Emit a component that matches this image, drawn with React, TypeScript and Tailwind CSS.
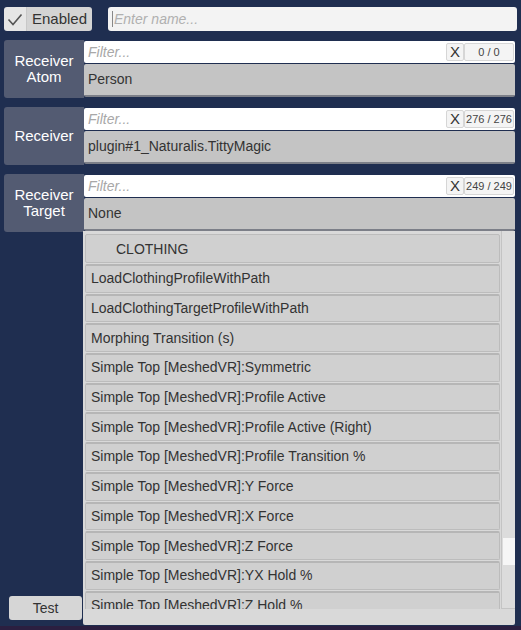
import React from "react";

const items = [
  "Simple Top [MeshedVR]:Symmetric",
  "Simple Top [MeshedVR]:Profile Active",
  "Simple Top [MeshedVR]:Profile Active (Right)",
  "Simple Top [MeshedVR]:Profile Transition %",
  "Simple Top [MeshedVR]:Y Force",
  "Simple Top [MeshedVR]:X Force",
  "Simple Top [MeshedVR]:Z Force",
  "Simple Top [MeshedVR]:YX Hold %",
  "Simple Top [MeshedVR]:Z Hold %",
];

function Chooser({ label, value, count }: { label: string[]; value: string; count: string }) {
  return (
    <div className="flex h-[58px] ml-[4px] mr-[6px]">
      <div className="w-[80px] shrink-0 bg-[#535b72] rounded-l-[3px] flex flex-col items-center justify-center text-white text-[15px] leading-[16px]">
        {label.map((l) => (
          <div key={l}>{l}</div>
        ))}
      </div>
      <div className="flex-1 flex flex-col py-[1px] gap-[1px]">
        <div className="h-[22px] bg-white rounded-[2px] flex items-center pl-[4px] pr-[1px]">
          <span className="flex-1 italic text-[#a8a8a8] text-[14px]">Filter...</span>
          <div className="w-[18px] h-[18px] border border-[#d6d6d6] rounded-[2px] bg-[#f4f4f4] flex items-center justify-center text-[#333] text-[15px]">X</div>
          <div className="w-[50px] h-[18px] border border-[#d6d6d6] rounded-[2px] bg-[#f4f4f4] flex items-center justify-center whitespace-nowrap text-[#444] text-[11px]">{count}</div>
        </div>
        <div className="flex-1 bg-[#c4c4c4] rounded-[2px] border-b-[2px] border-[#7c7f88] flex items-center pl-[4px] text-[#333] text-[14px]">{value}</div>
      </div>
    </div>
  );
}

export default function App() {
  return (
    <div className="w-[521px] h-[630px] bg-[#1f2e50] relative overflow-hidden" style={{ fontFamily: '"Liberation Sans", Arial, sans-serif' }}>
      <div className="flex items-center pt-[7px] pl-[4px] pr-[4px] gap-[16px]">
        <div className="flex h-[24px] w-[88px] rounded-[3px] overflow-hidden">
          <div className="w-[23px] bg-[#e6e6e6] flex items-center justify-center border-r border-[#c8c8c8]">
            <svg width="16" height="13" viewBox="0 0 16 13">
              <path d="M1.5 6.5 L6 11.5 L14.5 1.5" fill="none" stroke="#555" strokeWidth="1.6" />
            </svg>
          </div>
          <div className="flex-1 bg-[#d4d4d4] flex items-center justify-center text-[#333] text-[15px]">Enabled</div>
        </div>
        <div className="flex-1 h-[24px] bg-[#f3f3f3] rounded-[3px] flex items-center pl-[4px]">
          <span className="w-[1px] h-[16px] bg-[#888] mr-[1px]" />
          <span className="italic text-[#b0b0b0] text-[14px]">Enter name...</span>
        </div>
      </div>
      <div className="flex flex-col gap-[9px] mt-[9px]">
        <Chooser label={["Receiver", "Atom"]} value="Person" count="0 / 0" />
        <Chooser label={["Receiver"]} value="plugin#1_Naturalis.TittyMagic" count="276 / 276" />
        <Chooser label={["Receiver", "Target"]} value="None" count="249 / 249" />
      </div>
      <div className="absolute left-[83px] top-[231px] w-[432px] h-[394px] bg-[#d9d9d9] rounded-b-[2px] flex flex-col">
        <div className="flex flex-1 overflow-hidden">
          <div className="flex-1 h-[378px] overflow-hidden pl-[2px] pr-[1px] pt-[3px] flex flex-col gap-[1px]">
            <div className="h-[29px] shrink-0 bg-[#d0d0d0] border border-[#bcbcbc] rounded-[2px] flex items-center pl-[30px] pt-[1px] text-[#333] text-[14px]">CLOTHING</div>
            {["LoadClothingProfileWithPath", "LoadClothingTargetProfileWithPath", "Morphing Transition (s)", ...items].map((t) => (
              <div key={t} className="h-[28.7px] shrink-0 bg-[#d0d0d0] border-t-[2px] border-x border-b border-[#bcbcbc] border-t-[#b6b6b6] rounded-[2px] flex items-center pl-[5px] text-[#333] text-[14px]">
                {t}
              </div>
            ))}
          </div>
          <div className="w-[14px] h-[378px] bg-[#dcdcdc] border-l border-[#c4c4c4] border-b relative">
            <div className="absolute left-[1px] right-0 top-[307px] h-[27px] bg-[#f6f6f6]" />
          </div>
        </div>
      </div>
      <div className="absolute left-[9px] top-[596px] w-[73px] h-[24px] bg-[#d6d6d6] rounded-[3px] flex items-center justify-center text-[#333] text-[14px]">Test</div>
      <div className="absolute left-0 right-0 bottom-0 h-[4px] bg-[#2b1f40]" />
    </div>
  );
}
